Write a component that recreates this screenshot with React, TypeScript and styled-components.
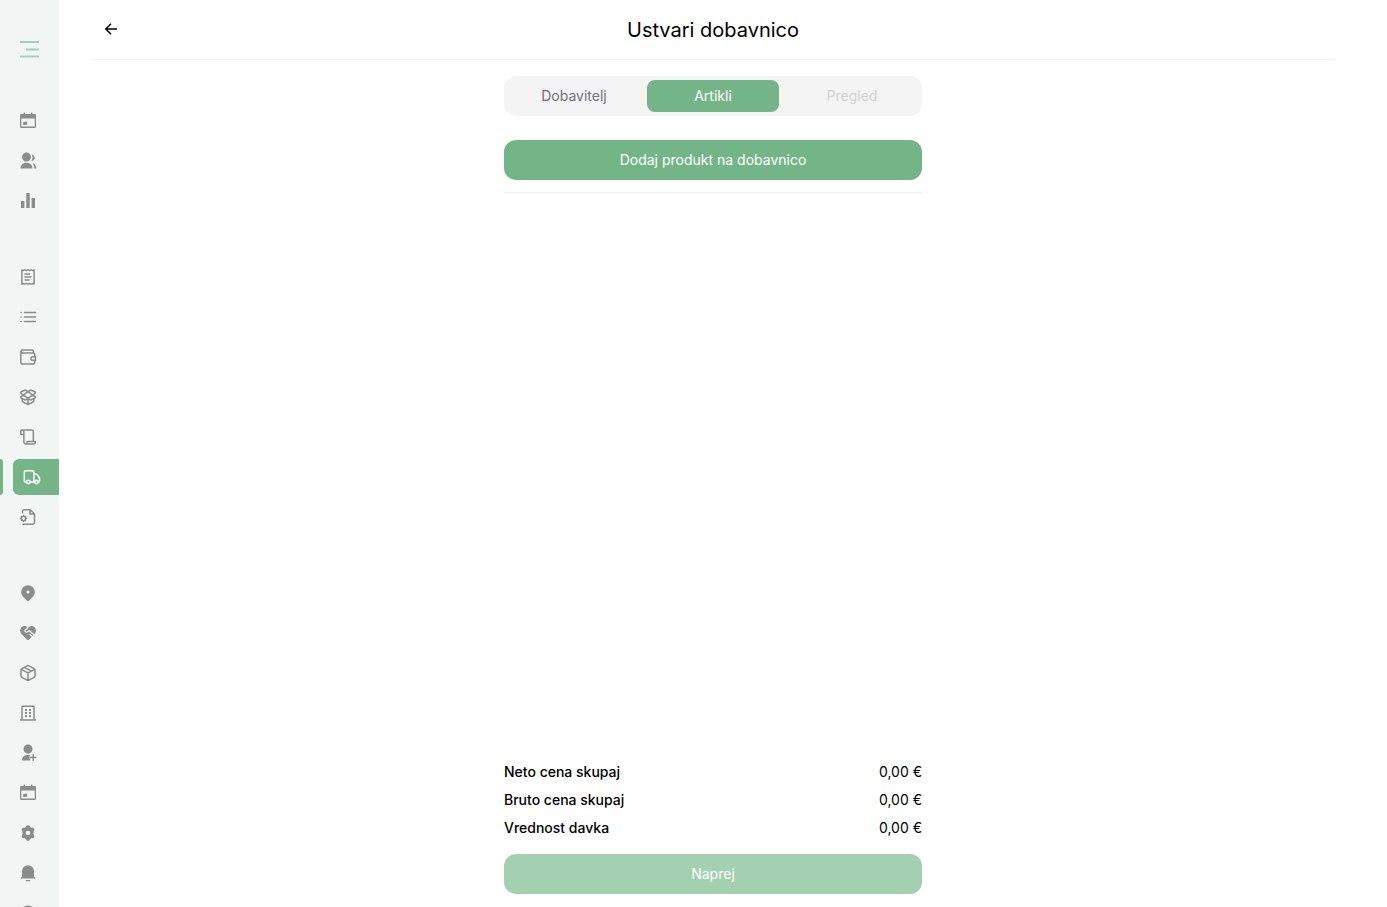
import React from "react";
import styled, { createGlobalStyle } from "styled-components";

const GlobalStyle = createGlobalStyle`
  * { box-sizing: border-box; }
  body {
    margin: 0;
    background: #fff;
    color: #000;
    font-family: Inter, "Liberation Sans", sans-serif;
    font-size: 14px;
    line-height: 20px;
  }
  button { font: inherit; border: 0; cursor: pointer; }
`;

const Page = styled.div`
  display: flex;
  height: 100vh;
  overflow: hidden;
`;

const Sidebar = styled.aside`
  flex: 0 0 59px;
  background: #f1f5f4;
  padding-top: 34px;
  overflow: hidden;
`;

const MenuButton = styled.button`
  display: flex;
  width: 59px;
  height: 30px;
  padding: 0;
  align-items: center;
  justify-content: center;
  background: none;
  color: #a4cfba;
`;

const NavGroup = styled.nav`
  display: flex;
  flex-direction: column;
  gap: 4px;
  margin-top: 39px;

  & + & { margin-top: 40px; }
`;

const NavLink = styled.a<{ $active?: boolean }>`
  display: flex;
  align-items: center;
  height: 36px;
  padding-left: ${(p) => (p.$active ? "9px" : "5px")};
  margin-left: 13px;
  border-radius: 6px 0 0 6px;
  color: ${(p) => (p.$active ? "#fff" : "#8a8c8b")};
  background: ${(p) => (p.$active ? "#74b587" : "transparent")};
  position: relative;

  &::before {
    content: "";
    display: ${(p) => (p.$active ? "block" : "none")};
    position: absolute;
    left: -13px;
    width: 3px;
    height: 36px;
    border-radius: 0 4px 4px 0;
    background: #74b587;
  }
`;

const Glyph = styled.svg`
  display: block;
  flex: none;
  fill: none;
  stroke: currentColor;
  stroke-width: 1.5;
  stroke-linecap: round;
  stroke-linejoin: round;

  .solid { fill: currentColor; stroke: none; }
`;

const Main = styled.main`
  flex: 1;
  min-width: 0;
  display: flex;
  flex-direction: column;
  align-items: center;
  padding: 0 52px 13px 32px;
`;

const Header = styled.header`
  display: grid;
  grid-template-columns: 40px 1fr 40px;
  align-items: center;
  align-self: stretch;
  height: 60px;
  border-bottom: 1px solid #efefef;
`;

const BackButton = styled.button`
  display: flex;
  align-items: center;
  justify-content: center;
  width: 40px;
  height: 40px;
  padding: 0 0 2px;
  background: none;
  color: #000;
`;

const Title = styled.h1`
  margin: 0;
  font-size: 20px;
  line-height: 28px;
  font-weight: 400;
  text-align: center;
`;

const Content = styled.div`
  flex: 1;
  width: 100%;
  max-width: 418px;
  display: flex;
  flex-direction: column;
  padding-top: 16px;
`;

const Steps = styled.div`
  display: grid;
  grid-template-columns: repeat(3, 1fr);
  gap: 7px;
  padding: 4px;
  border-radius: 12px;
  background: #f4f4f4;
`;

const Step = styled.button<{ $active?: boolean }>`
  height: 32px;
  padding: 0;
  border-radius: 8px;
  color: ${(p) => (p.$active ? "#fff" : "#71717a")};
  background: ${(p) => (p.$active ? "#74b587" : "transparent")};

  &:disabled { color: #d1d1d3; cursor: default; }
`;

const PrimaryButton = styled.button`
  width: 100%;
  height: 40px;
  flex: none;
  border-radius: 12px;
  background: #74b587;
  color: #fff;

  &:disabled { background: #a4d0b2; cursor: default; }
`;

const ProductArea = styled.section`
  flex: 1;
  padding-top: 24px;
`;

const Divider = styled.hr`
  margin: 12px 0 0;
  border: 0;
  border-top: 1px solid #efefef;
`;

const Totals = styled.dl`
  display: flex;
  flex-direction: column;
  gap: 8px;
  margin: 0 0 16px;
`;

const TotalRow = styled.div`
  display: flex;
  justify-content: space-between;

  dt { font-weight: 500; }
  dd { margin: 0; }
`;

const icons: Record<string, React.ReactNode> = {
  calendar: (
    <>
      <path className="solid" fillRule="evenodd" d="M5.500 1.500h1.600V3h5.800V1.500h1.600V3H17a1 1 0 0 1 1 1v11.700a1.200 1.200 0 0 1-1.200 1.200H3.200A1.200 1.200 0 0 1 2 15.700V4a1 1 0 0 1 1-1h2.500zM3.300 7.500v8h13.400v-8z" />
      <rect className="solid" x="5.200" y="10.800" width="4" height="3" />
    </>
  ),
  users: (
    <path className="solid" d="M8.500 1.600a4.500 4.500 0 1 1 0 9 4.500 4.500 0 0 1 0-9zM2.500 17.500c0-3.600 2.400-5.800 6-5.800s6 2.200 6 5.800zM13.400 10.100c1.500-2 1.500-4.600.3-6.700 2 .5 3 1.900 3 3.600 0 1.600-1.200 3-3.300 3.100zM14.300 11.800c2.500.6 3.800 2.500 4 5.700h-2c0-2.200-.6-4.200-2-5.700z" />
  ),
  chart: <path className="solid" d="M3 10h3.400v7H3zM8.300 2h3.400v15H8.300zM13.600 7H17v10h-3.400z" />,
  receipt: (
    <>
      <path d="M3.900 2.900l1.200.6 1.600-.6 1.700.6L10 2.900l1.600.6 1.700-.6 1.600.6 1.200-.6v14.200l-1.200-.6-1.600.6-1.700-.6-1.600.6-1.600-.6-1.700.6-1.600-.6-1.200.6z" />
      <path d="M7 7h4.500M7 10h6M7 13h4" />
    </>
  ),
  list: <path d="M6.500 5.500h11M6.500 10h11M6.500 14.500h11M3 5.500h.1M3 10h.1M3 14.500h.1" />,
  wallet: (
    <>
      <path d="M15.300 6V4a1 1 0 0 0-1-1H4.500a1.500 1.500 0 0 0 0 3h11a1.200 1.200 0 0 1 1.200 1.200v2.200M2.800 4.800v10.400A1.800 1.800 0 0 0 4.600 17h10.900a1.200 1.200 0 0 0 1.200-1.200v-2.300" />
      <path d="M17.500 9.700h-2.700a1.800 1.800 0 0 0 0 3.600h2.700z" />
    </>
  ),
  openBox: (
    <>
      <path d="M10 4.700l-2-1.400a1.500 1.500 0 0 0-1.300-.1L3.200 4.700a.9.900 0 0 0-.2 1.500l2.200 1.900L10 4.700l2-1.400a1.500 1.500 0 0 1 1.300-.1l3.500 1.500a.9.900 0 0 1 .2 1.500l-2.200 1.900L10 4.700M5.200 8.100L3 9.500a.9.900 0 0 0 .1 1.600l3.600 1.700a1.500 1.500 0 0 0 1.500-.1L10 11.200zM14.800 8.100L17 9.500a.9.900 0 0 1-.1 1.600l-3.600 1.700a1.500 1.500 0 0 1-1.500-.1L10 11.200z" />
      <path d="M10 11.200v6.200M4.200 11.800v2a1.300 1.300 0 0 0 .7 1.200l4.300 2.200a1.800 1.800 0 0 0 1.600 0l4.300-2.200a1.300 1.300 0 0 0 .7-1.200v-2" />
    </>
  ),
  scroll: (
    <>
      <path d="M5.900 7.500H3.200a.5.500 0 0 1-.5-.5V4.700a1.600 1.600 0 0 1 3.200 0v10.400A1.900 1.900 0 0 0 7.800 17h8a1.700 1.700 0 0 0 1.700-1.700v-.9H9.200v.900A1.600 1.600 0 0 1 7.700 17M4.300 3.100h9a2 2 0 0 1 2 2v9.200" />
    </>
  ),
  truck: (
    <>
      <path d="M4.300 15H3.200a.9.900 0 0 1-.9-.9V5.300a1.500 1.500 0 0 1 1.500-1.500h6.500a1.500 1.500 0 0 1 1.500 1.500V15H8.200M11.800 7.200h2.500a1 1 0 0 1 .8.400l2.500 3.400v3.100a.9.900 0 0 1-.9.900M11.800 15h.6" />
      <circle cx="6.300" cy="15" r="1.700" />
      <circle cx="14.500" cy="15" r="1.700" />
    </>
  ),
  fileGear: (
    <>
      <path d="M4.500 5.800V4.400A1.700 1.700 0 0 1 6.200 2.700h6L16.500 7v8.600a1.700 1.700 0 0 1-1.700 1.700H5M12 2.900V7h4.300" />
      <circle cx="5.500" cy="11.500" r="2.200" />
      <path strokeWidth="1.400" d="M5.500 8.500v.6M5.500 13.900v.6M2.500 11.500h.6M7.900 11.500h.6M3.400 9.400l.4.400M7.200 13.200l.4.400M3.400 13.600l.4-.4M7.200 9.800l.4-.4" />
    </>
  ),
  pin: (
    <path className="solid" fillRule="evenodd" d="M10 2.200a6.900 6.900 0 0 1 6.900 6.900c0 3.600-3.300 6-6.900 9.400-3.600-3.400-6.900-5.800-6.900-9.400A6.900 6.900 0 0 1 10 2.200zm0 5.300a1.500 1.500 0 1 0 0 3 1.500 1.500 0 0 0 0-3z" />
  ),
  partners: (
    <>
      <path className="solid" d="M10 3.800C7.500 2.400 4.500 2.700 3 4.700c-1.500 2.200-1.100 4.600.7 6.500l5.100 5.200c.8.700 1.600.7 2.400 0l5.100-5.200c1.800-1.900 2.200-4.300.7-6.500-1.500-2-4.500-2.300-7-.9z" />
      <path stroke="#f1f5f4" strokeWidth="1.300" d="M11.300 3L7 7.300c-.6 1.700 1.600 2.300 2.800 1.200l1.500-.9 4.900 4.400M11.800 11.200l2.300 2.200" />
    </>
  ),
  box: (
    <path d="M10 2.400l6.100 3.300a1.700 1.700 0 0 1 .9 1.500v5.600a1.700 1.700 0 0 1-.9 1.500L10 17.600l-6.100-3.300a1.700 1.700 0 0 1-.9-1.500V7.200a1.700 1.700 0 0 1 .9-1.500zM3.300 6.300L10 9.900l6.700-3.600M10 9.900v7.500M6.500 4.400l6.800 3.700" />
  ),
  building: (
    <>
      <path d="M4 17V3.200h12V17M2.600 17h14.800" />
      <path className="solid" d="M7 6h2v2H7zM11 6h2v2h-2zM7 9h2v2H7zM11 9h2v2h-2zM7 12h2v2H7zM11 12h2v2h-2z" />
    </>
  ),
  userPlus: (
    <>
      <path className="solid" d="M10 1.500a4.500 4.500 0 1 1 0 9 4.500 4.500 0 0 1 0-9zM4 17.500c0-3.500 2.400-5.800 6-5.800.8 0 1.500.1 2.200.3v5.500z" />
      <path stroke="#f1f5f4" strokeWidth="3.500" strokeLinecap="butt" d="M15.200 11v7M11.600 14.500h6.600" />
      <path strokeLinecap="butt" d="M15.200 11.300v6.400M12 14.500h6.400" />
    </>
  ),
  gear: (
    <path className="solid" fillRule="evenodd" d="M8.800 2.600q1.200-.6 2.400 0l1 1.500 1.200.7 1.800-.1q1.100.8 1.200 2.100l-.8 1.700v3l.8 1.700q-.1 1.300-1.200 2.100l-1.800-.1-1.200.7-1 1.500q-1.200.6-2.400 0l-1-1.500-1.200-.7-1.800.1q-1.100-.8-1.200-2.100l.8-1.700v-3l-.8-1.700q.1-1.300 1.200-2.100l1.800.1 1.200-.7zM10 7.700a2.300 2.300 0 1 0 0 4.600 2.300 2.300 0 0 0 0-4.600z" />
  ),
  bell: (
    <path className="solid" d="M10 2.200a6 6 0 0 1 6 6v5.500l1.400 1v.9H2.600v-.9l1.400-1V8.200a6 6 0 0 1 6-6zM7.800 17h4.400v1.200H7.800z" />
  ),
  help: <circle className="solid" cx="10" cy="10.500" r="8" />,
};

const groups: [string, string][][] = [
  [["calendar", "Koledar"], ["users", "Stranke"], ["chart", "Statistika"]],
  [
    ["receipt", "Računi"],
    ["list", "Seznam"],
    ["wallet", "Blagajna"],
    ["openBox", "Zaloga"],
    ["scroll", "Inventura"],
    ["truck", "Dobavnice"],
    ["fileGear", "Dokumenti"],
  ],
  [
    ["pin", "Lokacije"],
    ["partners", "Partnerji"],
    ["box", "Produkti"],
    ["building", "Podjetje"],
    ["userPlus", "Zaposleni"],
    ["calendar", "Urnik"],
    ["gear", "Nastavitve"],
    ["bell", "Obvestila"],
    ["help", "Pomoč"],
  ],
];

const totals = ["Neto cena skupaj", "Bruto cena skupaj", "Vrednost davka"];

export default function App() {
  return (
    <Page>
      <GlobalStyle />
      <Sidebar>
        <MenuButton aria-label="Meni">
          <Glyph width="20" height="20" viewBox="0 0 20 20">
            <path strokeWidth="2" strokeLinecap="butt" d="M0 3h19M6 10.400h13M0 17.600h19" />
          </Glyph>
        </MenuButton>
        {groups.map((group, index) => (
          <NavGroup key={index}>
            {group.map(([icon, label]) => (
              <NavLink key={label} href="#" aria-label={label} $active={icon === "truck"}>
                <Glyph width="20" height="20" viewBox="0 0 20 20">{icons[icon]}</Glyph>
              </NavLink>
            ))}
          </NavGroup>
        ))}
      </Sidebar>
      <Main>
        <Header>
          <BackButton aria-label="Nazaj">
            <Glyph width="16" height="16" viewBox="0 0 16 16">
              <path strokeLinecap="butt" strokeLinejoin="miter" d="M14 8H3M8 2.800L2.800 8 8 13.200" />
            </Glyph>
          </BackButton>
          <Title>Ustvari dobavnico</Title>
        </Header>
        <Content>
          <Steps>
            <Step>Dobavitelj</Step>
            <Step $active>Artikli</Step>
            <Step disabled>Pregled</Step>
          </Steps>
          <ProductArea>
            <PrimaryButton>Dodaj produkt na dobavnico</PrimaryButton>
            <Divider />
          </ProductArea>
          <Totals>
            {totals.map((label) => (
              <TotalRow key={label}>
                <dt>{label}</dt>
                <dd>0,00 €</dd>
              </TotalRow>
            ))}
          </Totals>
          <PrimaryButton disabled>Naprej</PrimaryButton>
        </Content>
      </Main>
    </Page>
  );
}
